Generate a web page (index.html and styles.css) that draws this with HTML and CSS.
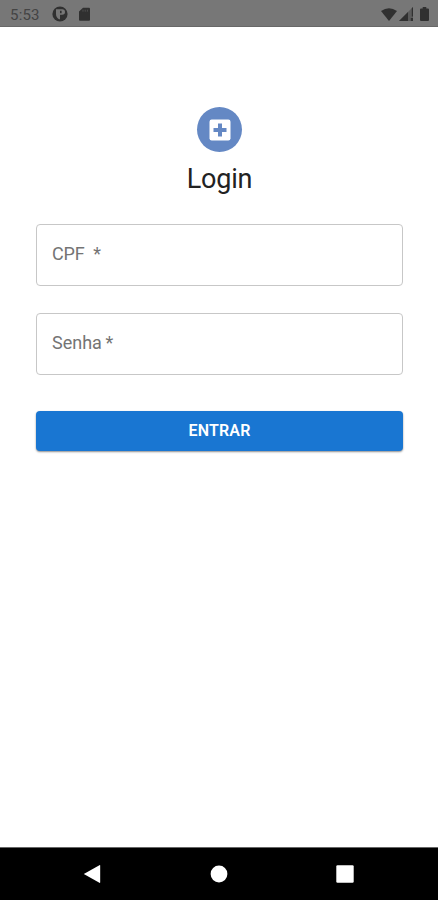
FILE: index.html
```html
<!DOCTYPE html>
<html lang="pt-BR">
<head>
<meta charset="utf-8">
<meta name="viewport" content="width=device-width, initial-scale=1">
<title>Login</title>
<link rel="stylesheet" href="styles.css">
</head>
<body>
<div class="screen">
  <header class="status">
    <span class="time">5:53</span>
    <svg class="app-icon" width="16" height="16" viewBox="0 0 16 16"><circle cx="8" cy="8" r="7.6" fill="#303030"/><path d="M4 3.2h6.2a2.8 2.8 0 0 1 0 5.6H8v4.4H7Q4 11.5 4 8z" fill="#777"/><path d="M8 4.8h1.6v2.4H8z" fill="#303030"/></svg>
    <svg class="sd-icon" width="11" height="14" viewBox="0 0 11 14"><path d="M4 .7h6q1 0 1 1v11q0 1-1 1H1q-1 0-1-1V4.5z" fill="#303030"/><path d="M4 2.7v2M6.2 2.7v2M8.4 2.7v2" stroke="#555" stroke-width=".8"/></svg>
    <span class="grow"></span>
    <svg class="wifi" width="16" height="13" viewBox="0 0 16 13"><path d="M0 3Q8-2.6 16 3L8 13z" fill="#303030"/></svg>
    <svg class="signal" width="14" height="14" viewBox="0 0 14 14"><path d="M0 14 14 0v14z" fill="#5b5b5b"/><path d="M0 14 9 5v9zM11.8 11H14v3h-2.2zM12.8 1.2 14 0v9.5h-1.2z" fill="#303030"/></svg>
    <svg class="battery" width="9" height="14" viewBox="0 0 9 14"><path d="M2.7 0h3.6v1.5H8q1 0 1 1V13q0 1-1 1H1q-1 0-1-1V2.5q0-1 1-1h1.7z" fill="#303030"/></svg>
  </header>
  <main class="content">
    <div class="avatar">
      <svg width="22" height="22" viewBox="0 0 22 22"><rect x=".5" y=".5" width="21" height="21" rx="2.2" fill="#fff"/><path d="M9 4.5h4V9h4.5v4H13v4.5H9V13H4.5V9H9z" fill="#6488c4"/></svg>
    </div>
    <h1 class="title">Login</h1>
    <form class="form">
      <div class="field"><label class="cpf">CPF&nbsp; *</label></div>
      <div class="field"><label class="senha">Senha&#8201;*</label></div>
      <button type="button" class="submit"><span>ENTRAR</span></button>
    </form>
  </main>
  <nav class="nav">
    <svg width="18" height="20" viewBox="0 0 18 20"><path d="M.8 10 16.4 1.2q.8-.4.8.5v16.6q0 .9-.8.5z" fill="#fff"/></svg>
    <svg width="18" height="18" viewBox="0 0 18 18"><circle cx="9" cy="9" r="8.4" fill="#fff"/></svg>
    <svg width="18" height="18" viewBox="0 0 18 18"><rect x=".3" y=".3" width="17.4" height="17.4" rx="1.2" fill="#fff"/></svg>
  </nav>
</div>
</body>
</html>
```
FILE: styles.css
```css
* { box-sizing: border-box; }
body { margin: 0; background: #fff; font-family: Roboto, "Liberation Sans", sans-serif; }
svg { display: block; flex: none; }
.screen { height: 900px; display: flex; flex-direction: column; }
.status {
  height: 27px;
  padding: 2px 9px 0 10px;
  display: flex;
  align-items: center;
  background: #777;
  border-bottom: 1px solid #686868;
}
.time { width: 42px; font-size: 15px; line-height: 24px; letter-spacing: .2px; color: #444; padding-top: 1px; }
.sd-icon { margin-left: 11px; }
.grow { flex: 1; }
.wifi { margin-right: 2px; }
.battery { margin-left: 7px; }
.content { flex: 1; padding: 80px 35px 0 36px; display: flex; flex-direction: column; align-items: center; }
.avatar {
  width: 45px;
  height: 45px;
  border-radius: 50%;
  background: #6488c4;
  display: flex;
  align-items: center;
  justify-content: center;
}
.title { margin: 10px 0 0; font-size: 27px; line-height: 34px; font-weight: 400; letter-spacing: -.2px; color: #222; }
.form { width: 100%; margin-top: 28px; }
.field {
  height: 62px;
  margin-bottom: 27px;
  padding: 0 15px 2px;
  border: 1px solid #c7c7c7;
  border-radius: 4px;
  display: flex;
  align-items: center;
}
.field label { font-size: 18px; line-height: 24px; color: #747474; white-space: nowrap; }
.cpf { letter-spacing: -.15px; }
.submit {
  display: block;
  width: 100%;
  height: 40px;
  margin-top: 36px;
  padding: 0;
  border: 0;
  border-radius: 4px;
  background: #1976d2;
  box-shadow: 0 1px 2px rgba(0, 0, 0, .45);
  color: #fff;
  font: 600 16px/40px Roboto, "Liberation Sans", sans-serif;
  letter-spacing: .2px;
}
.nav {
  height: 53px;
  padding: 0 84px 0 83px;
  display: flex;
  align-items: center;
  justify-content: space-between;
  background: #000;
  border-top: 1px solid #666;
}
```
